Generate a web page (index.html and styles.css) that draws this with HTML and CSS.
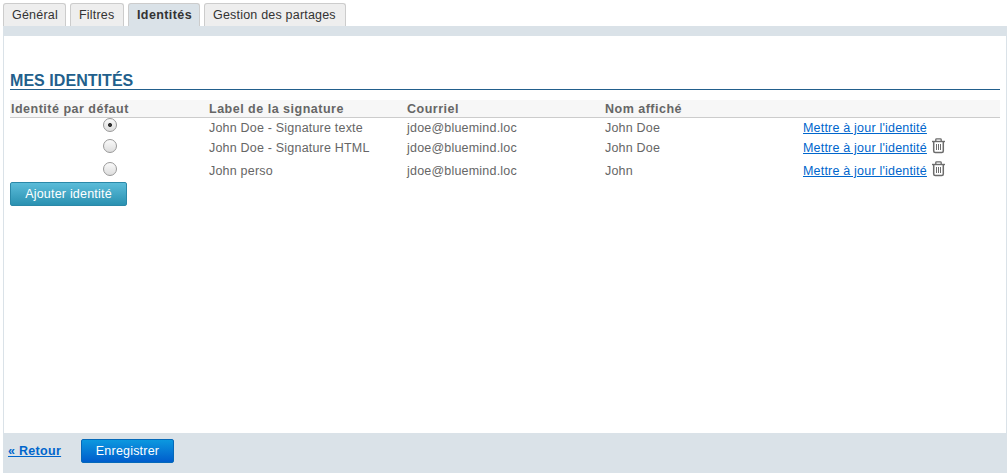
FILE: index.html
```html
<!DOCTYPE html>
<html lang="fr">
<head>
<meta charset="utf-8">
<title>Mes identités</title>
<link rel="stylesheet" href="styles.css">
</head>
<body>
<svg class="defs" width="0" height="0"><symbol id="trash" viewBox="0 0 13 16"><g fill="none" stroke="#6c6c6c"><path d="M3.8 3.5V1.6q0-.8.8-.8h3.8q.8 0 .8.8v1.9" stroke-width="1.3"/><path d="M0 3.5h13" stroke-width="1.4"/><path d="M1.7 4v9q0 1.5 1.5 1.5h6.6q1.5 0 1.5-1.5V4" stroke-width="1.5"/><path d="M4.5 6v6M6.5 6v6M8.5 6v6" stroke-width="1"/></g></symbol></svg>
<div class="page">
  <nav class="tabs">
    <a class="tab t1"><span>Général</span></a><a class="tab t2"><span>Filtres</span></a><a class="tab t3 active"><span>Identités</span></a><a class="tab t4"><span>Gestion des partages</span></a>
  </nav>
  <main class="panel">
    <h1>MES IDENTITÉS</h1>
    <div class="row head"><span>Identité par défaut</span><span>Label de la signature</span><span>Courriel</span><span>Nom affiché</span><span></span></div>
    <div class="row r1"><span class="pick"><i class="radio checked"></i></span><span>John Doe - Signature texte</span><span>jdoe@bluemind.loc</span><span>John Doe</span><span><a class="link">Mettre à jour l'identité</a></span></div>
    <div class="row r2"><span class="pick"><i class="radio"></i></span><span>John Doe - Signature HTML</span><span>jdoe@bluemind.loc</span><span>John Doe</span><span class="actions"><a class="link">Mettre à jour l'identité</a><svg class="trash"><use href="#trash"/></svg></span></div>
    <div class="row r3"><span class="pick"><i class="radio"></i></span><span>John perso</span><span>jdoe@bluemind.loc</span><span>John</span><span class="actions"><a class="link">Mettre à jour l'identité</a><svg class="trash"><use href="#trash"/></svg></span></div>
    <button class="btn add">Ajouter identité</button>
  </main>
  <footer class="footer"><a class="back">« Retour</a><button class="btn save">Enregistrer</button></footer>
</div>
</body>
</html>
```
FILE: styles.css
```css
* { box-sizing: border-box; }
body { margin: 0; background: #fff; color: #666; font: 12.5px/16px "Liberation Sans", Arial, sans-serif; letter-spacing: .2px; }
.defs { display: block; }
.page { height: 473px; padding: 3px 0 0 3px; display: flex; flex-direction: column; }
.tabs { display: flex; gap: 4px; height: 23px; }
.tab { height: 23px; padding: 3px 0 0 8px; border: 1px solid #ccc; border-bottom: 0; border-radius: 3px 3px 0 0; background: #eee; color: #333; white-space: nowrap; }
.t1 { width: 63px; }
.t2 { width: 54px; }
.t3 { width: 72px; }
.t4 { width: 142px; }
.tab.active { background: #dae2e8; font-weight: bold; letter-spacing: .4px; }
.panel { flex: 1; border: 1px solid #dae2e8; border-top-width: 10px; border-bottom: 0; padding: 34px 6px 0; }
h1 { margin: 0 0 10px; height: 20px; padding-top: 1px; border-bottom: 1px solid #225f8c; color: #225f8c; font: bold 16px/20px "Liberation Sans", Arial, sans-serif; letter-spacing: .05px; }
.row { display: grid; grid-template-columns: repeat(5, 198px); white-space: nowrap; }
.row > span { padding-left: 1px; }
.head { height: 18px; padding-top: 1px; background: #f7f7f7; border-bottom: 1px solid #ccc; font-weight: bold; letter-spacing: .5px; }
.r1 { height: 20px; padding-top: 2px; }
.r2 { height: 21px; padding-top: 2px; }
.r3 { height: 23px; padding-top: 4px; }
.pick { display: flex; justify-content: center; }
.radio { width: 14px; height: 14px; margin-left: 1px; border: 1px solid #999; border-radius: 50%; background: linear-gradient(#fafafa, #ddd); }
.r1 .radio { margin-top: -2px; }
.r2 .radio { margin-top: -1px; }
.r3 .radio { margin-top: -1px; }
.checked { background: radial-gradient(circle, #333 0 1.7px, transparent 2.3px), linear-gradient(#fafafa, #ddd); }
.link { width: 124px; color: #06c; text-decoration: underline; }
.actions { display: flex; gap: 5px; }
.trash { width: 13px; height: 16px; margin-top: -2px; }
.btn { display: block; height: 24px; padding: 0; border-radius: 2px; color: #fff; font: inherit; letter-spacing: inherit; }
.add { width: 117px; border: 1px solid #2a88a8; background: linear-gradient(#5bbcd9, #2a91b1); }
.footer { height: 40px; padding: 6px 0 0 5px; display: flex; background: #dae2e8; }
.back { width: 73px; padding-top: 4px; color: #06c; font-weight: bold; text-decoration: underline; letter-spacing: .3px; }
.save { width: 93px; border: 1px solid #0569b9; background: linear-gradient(#0c98df, #005dcc); }
```
